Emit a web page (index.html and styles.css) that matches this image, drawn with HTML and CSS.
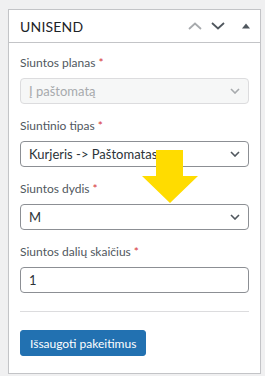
FILE: index.html
```
<!DOCTYPE html>
<html lang="lt">

<head>
    <meta charset="UTF-8">
    <meta name="viewport" content="width=device-width, initial-scale=1.0">
    <title>Unisend</title>

    <link rel="stylesheet" href="styles.css">

</head>

<body>

    <div class="postbox">
        <div class="postbox-header">
            <h2 class="hndle">UNISEND</h2>
            <div class="handle-actions">
                <button class="handle-btn">
                    <svg width="14" height="8" viewBox="0 0 14 8"><path d="M1 7 L7 1.5 L13 7" fill="none" stroke="#a7aaad" stroke-width="1.8"/></svg>
                </button>
                <button class="handle-btn">
                    <svg width="14" height="8" viewBox="0 0 14 8"><path d="M1 1 L7 6.5 L13 1" fill="none" stroke="#50575e" stroke-width="1.8"/></svg>
                </button>
                <button class="handle-btn toggle">
                    <svg width="8" height="6" viewBox="0 0 8 6"><path d="M0 5.5 L4 0.5 L8 5.5 Z" fill="#50575e"/></svg>
                </button>
            </div>
        </div>

        <div class="inside">
            <div class="field">
                <label>Siuntos planas <span class="req">*</span></label>
                <select class="control" disabled>
                    <option>Į paštomatą</option>
                </select>
            </div>

            <div class="field">
                <label>Siuntinio tipas <span class="req">*</span></label>
                <select class="control">
                    <option>Kurjeris -&gt; Paštomatas</option>
                </select>
            </div>

            <div class="field">
                <label>Siuntos dydis <span class="req">*</span></label>
                <select class="control">
                    <option>M</option>
                </select>
            </div>

            <div class="field">
                <label>Siuntos dalių skaičius <span class="req">*</span></label>
                <input class="control" type="text" value="1">
            </div>

            <hr class="sep">

            <button class="button-primary">Išsaugoti pakeitimus</button>
        </div>

        <!-- rodykle ant virsaus -->
        <svg class="arrow" width="56" height="53" viewBox="0 0 56 53">
            <path d="M14 0 H41 V26 H56 L28 53 L0 26 H14 Z" fill="#ffdc00"/>
        </svg>
    </div>

</body>

</html>
```

FILE: styles.css
```
body {
    margin: 0;
    background-color: #f0f0f1;
    font-family: Lato, "Noto Sans", sans-serif;
    font-size: 13px;
    color: #3c434a;
}

.postbox {
    position: relative;
    margin: 9px 4px 0 8px;
    background-color: #fff;
    border: 1px solid #c3c4c7;
    height: 365px;
    box-sizing: border-box;
    box-shadow: 0 1px 1px rgba(0, 0, 0, 0.04);
}

.postbox-header {
    display: flex;
    align-items: center;
    justify-content: space-between;
    height: 32px;
    border-bottom: 1px solid #c3c4c7;
    padding-left: 11px;
}

.hndle {
    margin: 0;
    font-size: 14px;
    font-weight: 400;
    color: #1d2327;
    letter-spacing: 0.2px;
}

.handle-actions {
    display: flex;
    align-items: center;
    padding-right: 10px;
}

.handle-btn {
    border: none;
    background: none;
    padding: 0;
    margin-left: 9px;
    display: flex;
    align-items: center;
    justify-content: center;
    width: 14px;
    height: 20px;
}

.handle-btn.toggle {
    margin-left: 17px;
    width: 8px;
}

.inside {
    padding: 11px 11px 0 11px;
}

.field {
    display: flex;
    flex-direction: column;
    margin-bottom: 13px;
}

.field label {
    font-size: 12px;
    line-height: 18px;
    margin-bottom: 6px;
    color: #50575e;
}

.req {
    color: #d63638;
}

.control {
    box-sizing: border-box;
    height: 26px;
    width: 100%;
    margin: 0;
    border: 1px solid #8c8f94;
    border-radius: 4px;
    background-color: #fff;
    font-family: Lato, "Noto Sans", sans-serif;
    font-size: 13px;
    color: #2c3338;
    padding: 0 8px;
}

select.control {
    appearance: none;
    -webkit-appearance: none;
    padding-right: 24px;
    background-image: url("data:image/svg+xml,%3Csvg xmlns='http://www.w3.org/2000/svg' width='10' height='6' viewBox='0 0 10 6'%3E%3Cpath d='M1 1 L5 5 L9 1' fill='none' stroke='%2350575e' stroke-width='1.6'/%3E%3C/svg%3E");
    background-repeat: no-repeat;
    background-position: right 8px center;
}

select.control:disabled {
    background-color: #f6f7f7;
    border-color: #dcdcde;
    color: #a7aaad;
    opacity: 1;
    background-image: url("data:image/svg+xml,%3Csvg xmlns='http://www.w3.org/2000/svg' width='10' height='6' viewBox='0 0 10 6'%3E%3Cpath d='M1 1 L5 5 L9 1' fill='none' stroke='%23a7aaad' stroke-width='1.6'/%3E%3C/svg%3E");
}

.sep {
    border: none;
    border-top: 1px solid #dcdcde;
    margin: 18px 0 18px 0;
}

.button-primary {
    background-color: #2271b1;
    border: 1px solid #2271b1;
    border-radius: 3px;
    color: #fff;
    font-family: Lato, "Noto Sans", sans-serif;
    font-size: 12px;
    height: 26px;
    padding: 0 9px;
}

.arrow {
    position: absolute;
    left: 133px;
    top: 140px;
}
```
